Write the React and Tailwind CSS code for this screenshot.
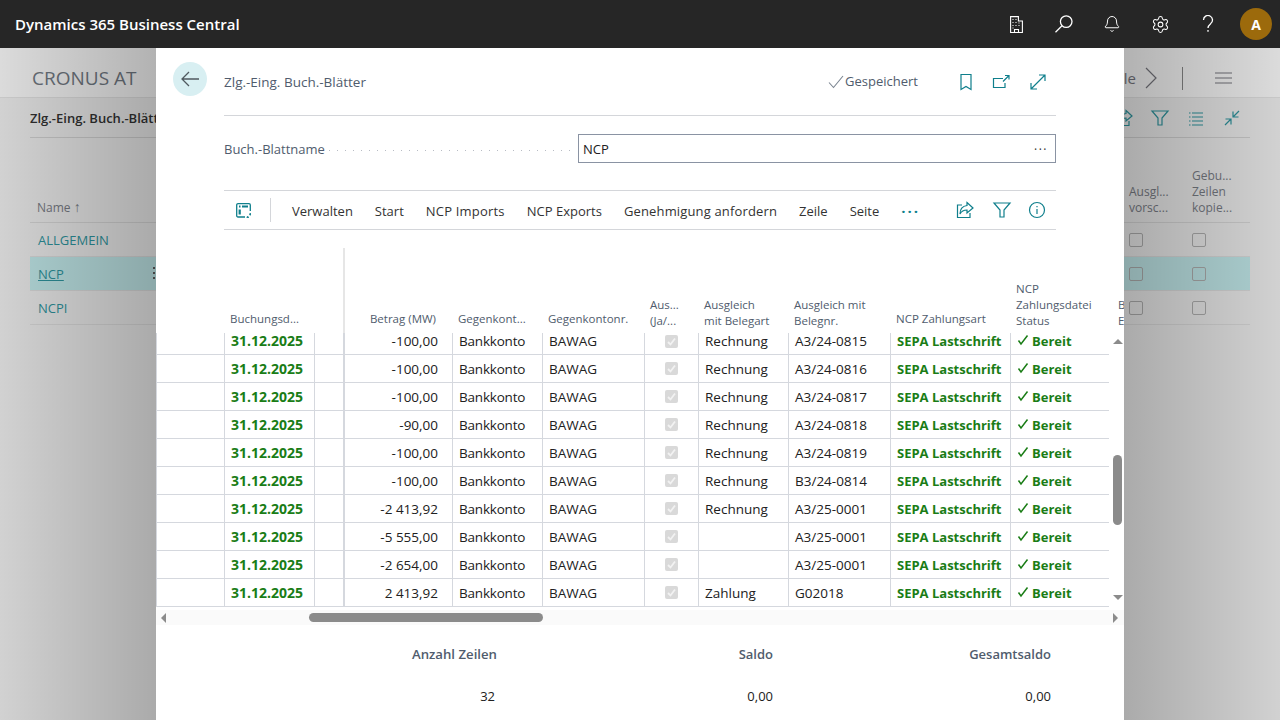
import { Bell, Settings } from "lucide-react";

const font = { fontFamily: '"Open Sans", "Noto Sans", sans-serif' };

const rows = [
  ["-100,00", "Rechnung", "A3/24-0815"],
  ["-100,00", "Rechnung", "A3/24-0816"],
  ["-100,00", "Rechnung", "A3/24-0817"],
  ["-90,00", "Rechnung", "A3/24-0818"],
  ["-100,00", "Rechnung", "A3/24-0819"],
  ["-100,00", "Rechnung", "B3/24-0814"],
  ["-2 413,92", "Rechnung", "A3/25-0001"],
  ["-5 555,00", "", "A3/25-0001"],
  ["-2 654,00", "", "A3/25-0001"],
  ["2 413,92", "Zahlung", "G02018"],
];

const cols = "grid grid-cols-[68px_90px_29px_109px_90px_102px_54px_90px_102px_120px_99px]";

const Teal = ({ children, size = 20 }) => (
  <svg width={size} height={size} viewBox="0 0 20 20" fill="none" stroke="currentColor" strokeWidth="1.2">
    {children}
  </svg>
);

const BuildingIcon = () => (
  <svg width="13" height="17" viewBox="0 0 13 17" fill="none" stroke="white" strokeWidth="1.1">
    <path d="M.6 16.500V.6h7.800v4.400h4v11.500z" />
    <path d="M4.500 16.500v-3h4v3" />
    <path d="M2.500 3.500h1M5.500 3.500h1M2.500 6.500h1M5.500 6.500h1M2.500 9.500h1M5.500 9.500h1M8.500 9.500h1M2.500 12h1M8.500 7h1" strokeWidth="1.200" />
  </svg>
);

const SearchIcon = () => (
  <svg width="20" height="20" viewBox="0 0 20 20" fill="none" stroke="white" strokeWidth="1.3">
    <circle cx="12.200" cy="7.600" r="5.800" />
    <path d="M8 11.800 1.500 18.300" />
  </svg>
);

const QuestionIcon = () => (
  <svg width="12" height="18" viewBox="0 0 12 18" fill="none" stroke="white" strokeWidth="1.300">
    <path d="M1.500 5a4.500 4.500 0 1 1 7.200 3.600C7 10 6 10.800 6 13" />
    <path d="M6 15v1.800" />
  </svg>
);

const BookmarkIcon = () => (
  <Teal>
    <path d="M5 2.500h10v15l-5-3-5 3z" />
  </Teal>
);

const PopoutIcon = () => (
  <Teal>
    <path d="M12 6.500H2.500v9H14V11" />
    <path d="M12 9.500 17.500 4M14 3.500h4v4" />
  </Teal>
);

const ExpandIcon = () => (
  <Teal>
    <path d="M3 17 17 3M11 3h6v6M3 11v6h6" />
  </Teal>
);

const CollapseIcon = () => (
  <Teal>
    <path d="M3 17l6-6M3.500 11H9v5.500M17 3l-6 6M16.500 9H11V3.500" />
  </Teal>
);

const PersonalizeIcon = () => (
  <svg width="15" height="15" viewBox="0 0 15 15" fill="none" stroke="currentColor" strokeWidth="1.300">
    <path d="M9 14H2A1.300 1.300 0 0 1 .7 12.700V2A1.300 1.300 0 0 1 2 .7h11A1.300 1.300 0 0 1 14.300 2v6" />
    <path d="M3 3.500h1.500M6 3.500h6" strokeWidth="2" />
    <path d="M3.700 6.500v5" strokeWidth="2.200" />
    <path d="M10.500 14.300h2.500M11.700 13v2.500M14.300 10v2.500M13 11.200h2.500" strokeWidth="1" />
  </svg>
);

const ShareIcon = () => (
  <Teal>
    <path d="M7 5H2.500v12.500H15V13" />
    <path d="M12 2.500 18 8l-6 5v-3C9 10 6.500 11 5 14c0-5 3-8 7-8.500z" />
  </Teal>
);

const FilterIcon = () => (
  <Teal>
    <path d="M2 3h16l-6 7v7H8v-7z" />
  </Teal>
);

const InfoIcon = () => (
  <Teal>
    <circle cx="10" cy="10" r="7.500" />
    <path d="M10 9v5M10 6v1.300" />
  </Teal>
);

const ListIcon = () => (
  <Teal>
    <path d="M3 5h1.500M6 5h11M3 9h1.500M6 9h11M3 13h1.500M6 13h11M3 17h1.500M6 17h11" />
  </Teal>
);

const DisabledCheck = () => (
  <span className="flex h-[13px] w-[13px] items-center justify-center rounded-[2px] bg-[#d9d9d9]">
    <svg width="11" height="11" viewBox="0 0 11 11" fill="none" stroke="#f2f2f2" strokeWidth="1.800">
      <path d="M2 6l2.500 2.500L9 2.500" />
    </svg>
  </span>
);

const BgRow = ({ name, active, selected }) => (
  <div className={`flex h-[34px] items-center justify-between border-b border-[#e4e4e4] ${selected ? "bg-[#c8f1f2]" : ""}`}>
    <span className={`pl-2 pt-[2px] text-[13px] text-[#2f99a3] ${active ? "underline" : ""}`}>{name}</span>
    <div className="flex">
      <span className="ml-[50px] h-[14px] w-[14px] rounded-[2px] border border-[#b5b5b5]" />
      <span className="ml-[49px] mr-[44px] h-[14px] w-[14px] rounded-[2px] border border-[#b5b5b5]" />
    </div>
  </div>
);

// the first row is partly scrolled away under the header
const TableRow = ({ amount, type, doc, first }) => {
  const center = first ? "pb-[5px]" : "";
  return (
    <div className={`${cols} ${first ? "h-[22px] grid-rows-[22px] leading-[16px]" : "h-[28px] grid-rows-[28px] leading-[28px]"} text-[13.500px] text-[#212121]`}>
      <div className="border-b border-l border-[#d5d8de]" />
      <div className="border-b border-l border-[#d5d8de] pl-[6px] text-[14px] font-bold text-[#1a7d16]">31.12.2025</div>
      <div className="border-b border-l border-[#d5d8de]" />
      <div className="border-b border-l-2 border-[#d5d8de] pr-[14px] text-right">{amount}</div>
      <div className="border-b border-l border-[#d5d8de] pl-[6px] tracking-[-0.2px]">Bankkonto</div>
      <div className="border-b border-l border-[#d5d8de] pl-[6px]">BAWAG</div>
      <div className={`flex items-center justify-center border-b border-l border-[#d5d8de] ${center}`}>
        <DisabledCheck />
      </div>
      <div className="border-b border-l border-[#d5d8de] pl-[6px]">{type}</div>
      <div className="border-b border-l border-[#d5d8de] pl-[6px]">{doc}</div>
      <div className="border-b border-l border-[#d5d8de] pl-[6px] text-[13px] font-bold whitespace-nowrap text-[#1a7d16]">SEPA Lastschrift</div>
      <div className={`flex items-center border-b border-l border-[#d5d8de] pl-[6px] text-[13px] leading-[16px] font-bold text-[#1a7d16] ${center}`}>
        <svg width="12" height="12" viewBox="0 0 12 12" fill="none" stroke="#1a7d16" strokeWidth="1.500" className="mr-[3px] mb-[2px]">
          <path d="M1.500 6.500 4 10 10.500 1.500" />
        </svg>
        Bereit
      </div>
    </div>
  );
};

const App = () => {
  return (
    <main className="relative flex h-[720px] w-[1280px] flex-col overflow-hidden bg-[#f4f4f4]" style={font}>
      <header className="flex h-[48px] shrink-0 items-center justify-between bg-[#262626] pl-[15px]">
        <span className="text-[15px] font-semibold text-white">Dynamics 365 Business Central</span>
        <div className="flex items-center text-white">
          <span className="flex w-[48px] justify-center"><BuildingIcon /></span>
          <span className="flex w-[48px] justify-center"><SearchIcon /></span>
          <span className="flex w-[48px] justify-center"><Bell size={18} strokeWidth={1.3} /></span>
          <span className="flex w-[48px] justify-center"><Settings size={19} strokeWidth={1.3} /></span>
          <span className="flex w-[48px] justify-center"><QuestionIcon /></span>
          <span className="flex w-[48px] justify-center">
            <span className="flex h-[32px] w-[32px] items-center justify-center rounded-full bg-[#9c6a0c] text-[14px] font-bold">A</span>
          </span>
        </div>
      </header>

      {/* page behind the dialog */}
      <section className="flex h-[50px] shrink-0 items-center justify-between border-b border-[#e8e8e8] bg-white pl-[32px] pr-[48px] pt-[11px]">
        <span className="text-[19px] text-[#747c86]">CRONUS AT</span>
        <div className="flex items-center text-[#7a7a82]">
          <span className="text-[15px]">le</span>
          <svg width="14" height="22" viewBox="0 0 14 22" fill="none" stroke="currentColor" strokeWidth="1.200" className="ml-[8px] mr-[24px]">
            <path d="M2 1l10 10L2 21" />
          </svg>
          <span className="mr-[32px] h-[23px] w-px bg-[#8c8c8c]" />
          <svg width="17" height="12" viewBox="0 0 17 12" fill="none" stroke="currentColor" strokeWidth="1.100">
            <path d="M0 1h17M0 6h17M0 11h17" />
          </svg>
        </div>
      </section>
      <section className="mx-[30px] flex h-[40px] shrink-0 items-center justify-between border-b border-[#d8d8d8]">
        <span className="pt-[3px] text-[13px] font-semibold text-[#333]">Zlg.-Eing. Buch.-Blätter</span>
        <div className="flex gap-[16px] pr-[8px] text-[#2f99a3]">
          <ShareIcon />
          <FilterIcon />
          <ListIcon />
          <CollapseIcon />
        </div>
      </section>
      <section className="mx-[30px] flex h-[85px] shrink-0 items-end justify-between border-b border-[#dedede] pb-[6px] text-[12px] leading-[16px] text-[#7c8189]">
        <span className="pl-[7px]">Name <span className="text-[14px] leading-none">↑</span></span>
        <div className="flex items-end">
          <span className="w-[63px]">Ausgl...<br />vorsc...</span>
          <span className="w-[58px]">Gebu...<br />Zeilen<br />kopie...</span>
        </div>
      </section>
      <section className="mx-[30px] shrink-0">
        <BgRow name="ALLGEMEIN" />
        <BgRow name="NCP" active selected />
        <BgRow name="NCPI" />
      </section>

      <div className="absolute inset-x-0 bottom-0 top-[48px] bg-[linear-gradient(to_right,rgba(0,0,0,0.14),rgba(0,0,0,0.3)_156px,rgba(0,0,0,0.3)_1124px,rgba(0,0,0,0.14))]" />
      <div className="absolute left-[153px] top-[267px] flex flex-col gap-[3px]">
        <span className="h-[2px] w-[2px] bg-[#444]" />
        <span className="h-[2px] w-[2px] bg-[#444]" />
        <span className="h-[2px] w-[2px] bg-[#444]" />
      </div>

      {/* dialog */}
      <div className="absolute bottom-0 left-[156px] top-[48px] w-[968px] overflow-hidden bg-white">
        <div className="mx-[68px] flex h-[68px] items-center justify-between border-b border-[#d4d6da]">
          <div className="flex items-center">
            <button className="-ml-[51px] mt-[-6px] mr-[17px] flex h-[34px] w-[34px] items-center justify-center rounded-full bg-[#d8eff2]">
              <svg width="18" height="16" viewBox="0 0 18 16" fill="none" stroke="#505a60" strokeWidth="1.300">
                <path d="M18 8H1M8 1 1 8l7 7" />
              </svg>
            </button>
            <span className="pt-[1px] text-[13.500px] text-[#505c6d]">Zlg.-Eing. Buch.-Blätter</span>
          </div>
          <div className="flex items-center pr-[8px] text-[#0f7f8c]">
            <svg width="16" height="14" viewBox="0 0 16 14" fill="none" stroke="#7b8591" strokeWidth="1.100">
              <path d="M1 7.500 5.500 12.500 15 1" />
            </svg>
            <span className="ml-[1px] mr-[38px] pt-[1px] text-[13px] text-[#505c6d]">Gespeichert</span>
            <span className="mr-[15px]"><BookmarkIcon /></span>
            <span className="mr-[17px]"><PopoutIcon /></span>
            <ExpandIcon />
          </div>
        </div>

        <div className="mx-[68px] flex h-[75px] items-center border-b border-[#d4d6da] pb-[9px]">
          <span className="mr-[4px] pt-[2px] text-[13px] text-[#505c6d]">Buch.-Blattname</span>
          <span className="mr-[6px] mt-[3px] h-px flex-1 bg-[linear-gradient(to_right,#b8bcc4_1px,transparent_1px)] bg-[length:8px_1px]" />
          <div className="flex h-[29px] w-[478px] items-center justify-between border border-[#8a93a3] pl-[4px] pr-[7px] pt-[2px] text-[13px] text-[#212121]">
            NCP
            <span className="text-[12px] leading-none tracking-[1.500px] text-[#333]">···</span>
          </div>
        </div>

        <div className="mx-[68px] flex h-[39px] items-center border-b border-[#d4d6da] pl-[12px] pr-[9px] text-[13px] text-[#333]">
          <span className="text-[#0f7f8c]"><PersonalizeIcon /></span>
          <span className="ml-[19px] mr-[21px] h-[24px] w-px bg-[#d4d6da]" />
          <nav className="flex flex-1 items-center gap-[22px] whitespace-nowrap pt-[3px]">
            <span>Verwalten</span>
            <span>Start</span>
            <span className="tracking-[0.2px]">NCP Imports</span>
            <span>NCP Exports</span>
            <span className="tracking-[0.15px]">Genehmigung anfordern</span>
            <span>Zeile</span>
            <span>Seite</span>
            <span className="text-[15px] font-bold leading-none tracking-[2px] text-[#0f7f8c]">···</span>
          </nav>
          <div className="flex text-[#0f7f8c]">
            <span className="mr-[17px]"><ShareIcon /></span>
            <span className="mr-[15px]"><FilterIcon /></span>
            <InfoIcon />
          </div>
        </div>

        <div className="flex pt-[18px]">
          <div className="w-[953px] shrink-0">
            <div className={`${cols} h-[85px] items-end text-[11.500px] leading-[16px] text-[#505c6d]`}>
              <div />
              <div className="pb-[6px] pl-[6px]">Buchungsd...</div>
              <div />
              <div className="flex h-full items-end justify-end border-l-2 border-[#e6e6e6] pb-[6px] pr-[16px]">Betrag (MW)</div>
              <div className="pb-[6px] pl-[6px] whitespace-nowrap">Gegenkont...</div>
              <div className="pb-[6px] pl-[6px] whitespace-nowrap">Gegenkontonr.</div>
              <div className="pb-[4px] pl-[6px]">Aus...<br />(Ja/...</div>
              <div className="pb-[4px] pl-[6px]">Ausgleich<br />mit Belegart</div>
              <div className="pb-[4px] pl-[6px] whitespace-nowrap">Ausgleich mit<br />Belegnr.</div>
              <div className="pb-[6px] pl-[6px] whitespace-nowrap">NCP Zahlungsart</div>
              <div className="pb-[4px] pl-[6px] whitespace-nowrap">NCP<br />Zahlungsdatei<br />Status</div>
            </div>
            <div className="h-[274px]">
              {rows.map((r, i) => (
                <TableRow key={r[2] + r[0]} amount={r[0]} type={r[1]} doc={r[2]} first={i === 0} />
              ))}
            </div>
          </div>
          <div className="flex flex-1 flex-col">
            <div className="flex h-[85px] items-end pb-[4px] pl-[9px] text-[11.500px] leading-[16px] text-[#505c6d]">
              <span>B<br />E</span>
            </div>
            <div className="flex h-[274px] flex-col items-center pl-[3px] pr-[2px]">
              <span className="mt-[6px] h-0 w-0 border-x-[5px] border-b-[5px] border-x-transparent border-b-[#8b8b8b]" />
              <span className="mt-[111px] h-[70px] w-[9px] rounded-[5px] bg-[#8b8b8b]" />
              <span className="mt-[70px] h-0 w-0 border-x-[5px] border-t-[5px] border-x-transparent border-t-[#8b8b8b]" />
            </div>
          </div>
        </div>

        <div className="mt-[3px] flex h-[15px] items-center bg-[#fafafa]">
          <span className="ml-[5px] h-0 w-0 border-y-[5px] border-r-[5px] border-y-transparent border-r-[#8b8b8b]" />
          <span className="ml-[143px] h-[9px] w-[234px] rounded-[5px] bg-[#8b8b8b]" />
          <span className="ml-auto mr-[6px] h-0 w-0 border-y-[5px] border-l-[5px] border-y-transparent border-l-[#8b8b8b]" />
        </div>

        <div className="mt-[20px] grid w-[895px] grid-cols-[341px_276px_278px] text-right text-[13px]">
          <span className="font-semibold text-[13.200px] text-[#505c6d]">Anzahl Zeilen</span>
          <span className="font-semibold text-[#505c6d]">Saldo</span>
          <span className="font-semibold text-[#505c6d]">Gesamtsaldo</span>
          <span className="mt-[22px] pr-[2px] text-[#212121]">32</span>
          <span className="mt-[22px] text-[#212121]">0,00</span>
          <span className="mt-[22px] text-[#212121]">0,00</span>
        </div>
      </div>
    </main>
  );
};

export default App;
